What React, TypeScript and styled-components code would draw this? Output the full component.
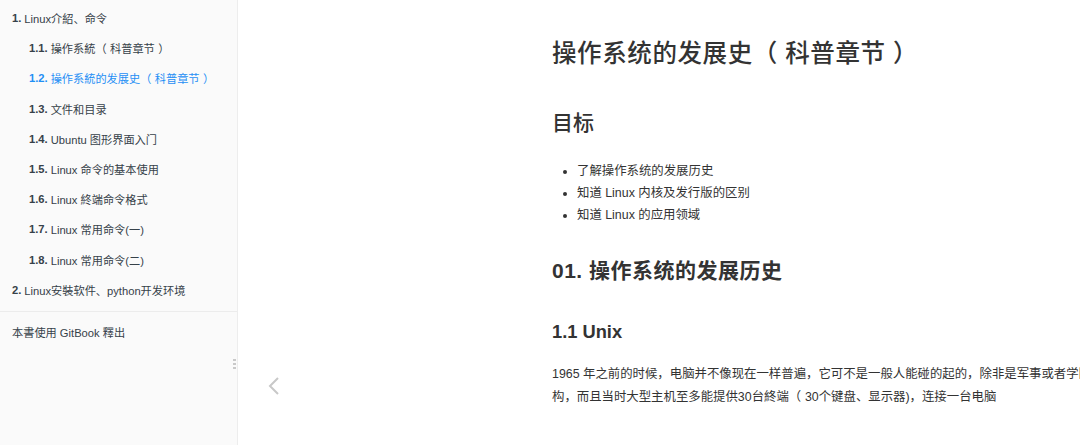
import React from "react";
import styled, { createGlobalStyle } from "styled-components";

const Global = createGlobalStyle`
  html, body { margin: 0; padding: 0; background: #fff; }
  body {
    font-family: "Liberation Sans", "Noto Sans CJK SC", sans-serif;
    color: #333;
    overflow: hidden;
  }
`;

const Page = styled.div`
  display: flex;
  width: 1080px;
  height: 445px;
  overflow: hidden;
`;

const Sidebar = styled.nav`
  position: relative;
  flex: 0 0 238px;
  background: #fafafa;
  border-right: 1px solid #ededed;
  padding-top: 3px;
  box-sizing: border-box;
`;

const SummaryList = styled.ul`
  list-style: none;
  margin: 0;
  padding: 0;
`;

const Item = styled.li<{ $level: number; $active?: boolean }>`
  height: 30.2px;
  display: flex;
  align-items: center;
  padding-left: ${(p) => (p.$level === 1 ? 12 : 29)}px;
  font-size: 11.2px;
  color: ${(p) => (p.$active ? "#1f8ff5" : "#364149")};
  white-space: nowrap;
`;

const Num = styled.b`
  font-weight: bold;
  margin-right: 3px;
`;

const Divider = styled.li`
  height: 1px;
  background: #ececec;
  margin: 6px 0 5px;
`;

const Footer = styled.li`
  height: 30px;
  display: flex;
  align-items: center;
  padding-left: 12px;
  font-size: 11.2px;
  color: #364149;
`;

const Handle = styled.div`
  position: absolute;
  right: 1px;
  top: 359px;
  width: 3px;
  height: 10px;
  background: repeating-linear-gradient(
    to bottom,
    #c9c9c9 0 2px,
    transparent 2px 4px
  );
`;

const Main = styled.main`
  position: relative;
  flex: 1;
  padding-left: 314px;
  padding-top: 36px;
  box-sizing: border-box;
  white-space: nowrap;
`;

const PrevArrow = styled.div`
  position: absolute;
  left: 28px;
  top: 376px;
  width: 16px;
  height: 20px;
  color: #c8c8c8;
`;

const H1 = styled.h1`
  margin: 0;
  font-size: 24.5px;
  line-height: 36px;
  font-weight: 500;
  letter-spacing: 0.6px;
  color: #333;
`;

const H2 = styled.h2<{ $top: number; $bold?: boolean }>`
  margin: ${(p) => p.$top}px 0 0;
  font-size: 21px;
  line-height: 30px;
  font-weight: ${(p) => (p.$bold ? "bold" : 500)};
  letter-spacing: ${(p) => (p.$bold ? "0.5px" : "0")};
  color: #333;
`;

const H3 = styled.h3`
  margin: 33px 0 0;
  font-size: 18.3px;
  line-height: 26px;
  font-weight: bold;
  color: #333;
`;

const List = styled.ul`
  margin: 22px 0 0;
  padding-left: 25px;
  font-size: 12.4px;
  line-height: 22px;
  color: #333;
`;

const Para = styled.p`
  margin: 18px 0 0;
  font-size: 12.4px;
  line-height: 23px;
  color: #333;
`;

const ParenMark = styled.span<{ $side: "open" | "close" }>`
  padding: ${(p) => (p.$side === "open" ? "0 0.3em 0 0" : "0 0 0 0.3em")};
`;

function Spaced({ text }: { text: string }) {
  const parts = text.split(/([（）])/);
  return (
    <>
      {parts.map((part, i) =>
        part === "（" ? (
          <ParenMark key={i} $side="open">（</ParenMark>
        ) : part === "）" ? (
          <ParenMark key={i} $side="close">）</ParenMark>
        ) : (
          <React.Fragment key={i}>{part}</React.Fragment>
        )
      )}
    </>
  );
}

const summary = [
  { level: 1, num: "1.", text: "Linux介紹、命令" },
  { level: 2, num: "1.1.", text: "操作系統（科普章节）" },
  { level: 2, num: "1.2.", text: "操作系統的发展史（科普章节）", active: true },
  { level: 2, num: "1.3.", text: "文件和目录" },
  { level: 2, num: "1.4.", text: "Ubuntu 图形界面入门" },
  { level: 2, num: "1.5.", text: "Linux 命令的基本使用" },
  { level: 2, num: "1.6.", text: "Linux 終端命令格式" },
  { level: 2, num: "1.7.", text: "Linux 常用命令(一)" },
  { level: 2, num: "1.8.", text: "Linux 常用命令(二)" },
  { level: 1, num: "2.", text: "Linux安裝软件、python开发环境" },
];

export default function App() {
  return (
    <>
      <Global />
      <Page>
        <Sidebar>
          <SummaryList>
            {summary.map((s) => (
              <Item key={s.num} $level={s.level} $active={s.active}>
                <Num>{s.num}</Num>
                <Spaced text={s.text} />
              </Item>
            ))}
            <Divider />
            <Footer>本書使用 GitBook 釋出</Footer>
          </SummaryList>
          <Handle />
        </Sidebar>
        <Main>
          <PrevArrow>
            <svg width="16" height="20" viewBox="0 0 16 20" fill="none">
              <path d="M12 2 L4 10 L12 18" stroke="currentColor" strokeWidth="2" />
            </svg>
          </PrevArrow>
          <H1>
            <Spaced text="操作系统的发展史（科普章节）" />
          </H1>
          <H2 $top={36}>目标</H2>
          <List>
            <li>了解操作系统的发展历史</li>
            <li>知道 Linux 内核及发行版的区别</li>
            <li>知道 Linux 的应用领域</li>
          </List>
          <H2 $top={30} $bold>
            01. 操作系统的发展历史
          </H2>
          <H3>1.1 Unix</H3>
          <Para>
            1965 年之前的时候，电脑并不像现在一样普遍，它可不是一般人能碰的起的，除非是军事或者学院的研究机
            <br />
            构，而且当时大型主机至多能提供30台終端<Spaced text="（" />30个键盘、显示器)，连接一台电脑
          </Para>
        </Main>
      </Page>
    </>
  );
}
